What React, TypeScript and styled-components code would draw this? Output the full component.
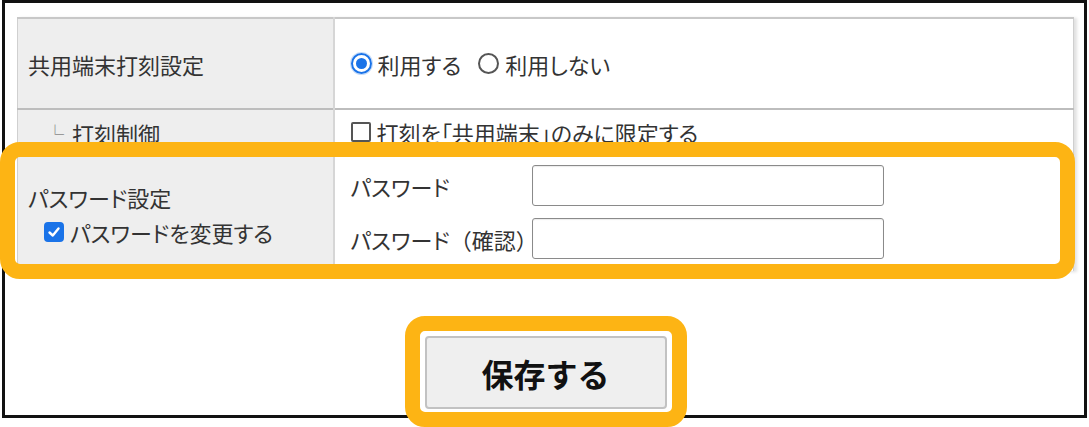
import React, { FC } from 'react'
import styled, { createGlobalStyle } from 'styled-components'

const GlobalStyle = createGlobalStyle`
    html, body { margin: 0; padding: 0; background: #ffffff; }
    body {
        font-family: "Noto Sans CJK JP", "Noto Sans", sans-serif;
        font-feature-settings: "palt";
        color: #333333;
    }
`

const Page = styled.div`
    position: relative;
    width: 1089px; height: 427px;
    padding-left: 2px;
    box-sizing: border-box;
    overflow: hidden;
`

const Frame = styled.div`
    width: 1085px; height: 418px;
    box-sizing: border-box;
    border: 3px solid #111111;
    padding: 14px 10px 0 12px;
    display: flex;
    flex-direction: column;
`

const Table = styled.table`
    width: 1057px;
    border-collapse: collapse;
    border-top: 2px solid #c8c8c8;
    border-left: 1px solid #d0d0d0;
    border-right: 1px solid #cfcfcf;
    box-shadow: 3px 1px 3px rgba(0, 0, 0, 0.12);
    font-size: 22px;
    tr + tr { border-top: 2px solid #bdbdbd; }
`

const LabelCell = styled.th<{ $h: number }>`
    width: 316px;
    height: ${p => p.$h}px;
    padding: 0 0 0 10px;
    background: #eeeeee;
    border-right: 2px solid #d6d6d6;
    text-align: left;
    font-weight: normal;
    vertical-align: middle;
    box-sizing: border-box;
`

const ValueCell = styled.td`
    padding: 0 0 0 16px;
    vertical-align: middle;
`

const Sub = styled.span`
    display: inline-flex;
    align-items: center;
    padding-left: 18px;
    gap: 8px;
    .branch { color: #8a8a8a; font-size: 18px; }
`

const Options = styled.div`
    display: flex;
    align-items: center;
    gap: 17px;
`

const Option = styled.label`
    display: inline-flex;
    align-items: center;
    gap: 6px;
    white-space: nowrap;
`

const Radio = styled.span<{ $checked?: boolean }>`
    width: 21px; height: 21px;
    box-sizing: border-box;
    border-radius: 50%;
    border: 2px solid ${p => p.$checked ? '#1a73e8' : '#555555'};
    box-shadow: ${p => p.$checked ? '0 0 0 1px rgba(26,115,232,0.25)' : 'none'};
    display: inline-flex;
    align-items: center;
    justify-content: center;
    flex-shrink: 0;
    &::after {
        content: '';
        width: 11px; height: 11px;
        border-radius: 50%;
        background: #1a73e8;
        display: ${p => p.$checked ? 'block' : 'none'};
    }
`

const Box = styled.span<{ $checked?: boolean }>`
    width: 20px; height: 20px;
    box-sizing: border-box;
    border-radius: ${p => p.$checked ? '4px' : '2px'};
    border: 2px solid ${p => p.$checked ? '#1a73e8' : '#555555'};
    background: ${p => p.$checked ? '#1a73e8' : '#ffffff'};
    display: inline-flex;
    align-items: center;
    justify-content: center;
    flex-shrink: 0;
`

const PasswordLabel = styled.div`
    display: flex;
    flex-direction: column;
    gap: 3px;
    padding-top: 2px;
    .sub { padding-left: 16px; }
`

const FieldList = styled.div`
    display: flex;
    flex-direction: column;
    gap: 12px;
    padding-bottom: 3px;
`

const Field = styled.div`
    display: flex;
    align-items: center;
    > span { width: 181px; flex-shrink: 0; white-space: nowrap; }
    .paren { font-feature-settings: normal; }
`

const TextInput = styled.input`
    width: 352px; height: 41px;
    box-sizing: border-box;
    border: 1px solid #8a8a8a;
    border-radius: 3px;
    box-shadow: inset 0 1px 1px rgba(0, 0, 0, 0.08);
    background: #ffffff;
    margin: 0;
`

const Actions = styled.div`
    display: flex;
    justify-content: center;
    margin-top: 65px;
`

const SaveButton = styled.button`
    width: 242px; height: 73px;
    box-sizing: border-box;
    background: #efefef;
    border: 2px solid #c2c2c2;
    border-radius: 4px;
    font-family: "Noto Sans CJK JP", sans-serif;
    font-weight: bold;
    font-size: 32px;
    color: #111111;
    padding: 0;
`

const Highlight = styled.div<{ $x: number; $y: number; $w: number; $h: number }>`
    position: absolute;
    left: ${p => p.$x}px; top: ${p => p.$y}px;
    width: ${p => p.$w}px; height: ${p => p.$h}px;
    box-sizing: border-box;
    border: 15px solid #fdb414;
    border-radius: 20px;
    pointer-events: none;
`

const Check: FC = () => <svg width="14" height="14" viewBox="0 0 14 14">
    <polyline points="2.5,7.5 5.8,10.5 11.5,3.5" fill="none" stroke="#ffffff" strokeWidth="2.4" strokeLinecap="round" strokeLinejoin="round" />
</svg>

export default function App() {
    return <>
        <GlobalStyle />
        <Page>
            <Frame>
                <Table>
                    <tbody>
                        <tr>
                            <LabelCell $h={91}>共用端末打刻設定</LabelCell>
                            <ValueCell>
                                <Options>
                                    <Option><Radio $checked />利用する</Option>
                                    <Option><Radio />利用しない</Option>
                                </Options>
                            </ValueCell>
                        </tr>
                        <tr>
                            <LabelCell $h={46}>
                                <Sub><span className="branch">└</span>打刻制御</Sub>
                            </LabelCell>
                            <ValueCell>
                                <Option><Box />打刻を「共用端末」のみに限定する</Option>
                            </ValueCell>
                        </tr>
                        <tr>
                            <LabelCell $h={116}>
                                <PasswordLabel>
                                    <span>パスワード設定</span>
                                    <Option className="sub"><Box $checked><Check /></Box>パスワードを変更する</Option>
                                </PasswordLabel>
                            </LabelCell>
                            <ValueCell>
                                <FieldList>
                                    <Field><span>パスワード</span><TextInput type="password" /></Field>
                                    <Field><span>パスワード<span className="paren">（確認）</span></span><TextInput type="password" /></Field>
                                </FieldList>
                            </ValueCell>
                        </tr>
                    </tbody>
                </Table>
                <Actions>
                    <SaveButton>保存する</SaveButton>
                </Actions>
            </Frame>
            <Highlight $x={0} $y={142} $w={1075} $h={137} />
            <Highlight $x={405} $y={316} $w={282} $h={111} />
        </Page>
    </>
}
